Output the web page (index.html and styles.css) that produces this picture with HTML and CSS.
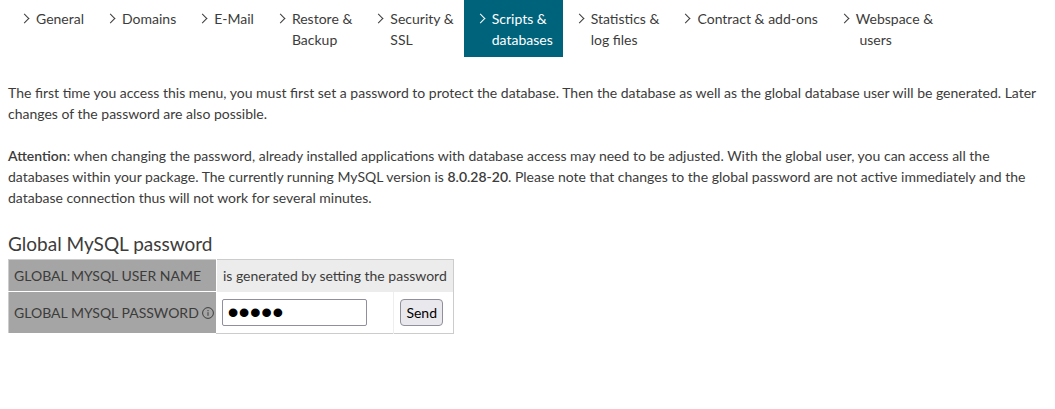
FILE: index.html
```html
<!DOCTYPE html>
<html lang="en">
<head>
    <meta charset="UTF-8">
    <meta name="viewport" content="width=device-width, initial-scale=1.0">
    <title>Scripts &amp; databases</title>

    <link rel="stylesheet" href="styles.css">
</head>
<body>
    <nav class="menu">
        <a href="#">General</a>
        <a href="#">Domains</a>
        <a href="#">E-Mail</a>
        <a href="#">Restore &amp;<br>Backup</a>
        <a href="#">Security &amp;<br>SSL</a>
        <a href="#" class="active">Scripts &amp;<br>databases</a>
        <a href="#">Statistics &amp;<br>log files</a>
        <a href="#">Contract &amp; add-ons</a>
        <a href="#">Webspace &amp;<br>&nbsp;users</a>
    </nav>

    <main>
        <p>The first time you access this menu, you must first set a password to protect the database. Then the database as well as the global database user will be generated. Later changes of the password are also possible.</p>
        <p><strong>Attention</strong>: when changing the password, already installed applications with database access may need to be adjusted. With the global user, you can access all the databases within your package. The currently running MySQL version is <strong>8.0.28-20</strong>. Please note that changes to the global password are not active immediately and the database connection thus will not work for several minutes.</p>

        <h2>Global MySQL password</h2>
        <form action="#">
            <table>
                <tr class="user-row">
                    <th scope="row">Global MySQL user name</th>
                    <td colspan="2">is generated by setting the password</td>
                </tr>
                <tr class="password-row">
                    <th scope="row">
                        <label for="password">Global MySQL password</label>
                        <svg class="info" viewBox="0 0 12 12" width="12" height="12" aria-hidden="true">
                            <circle cx="6" cy="6" r="5.4"/>
                            <path d="M6 5.2v3.6M6 3v1.2"/>
                        </svg>
                    </th>
                    <td class="field"><input type="password" id="password" value="mysql"></td>
                    <td class="action"><button type="submit">Send</button></td>
                </tr>
            </table>
        </form>
    </main>
</body>
</html>
```

FILE: styles.css
```css
body {
    margin: 0;
    background: #fff;
    color: #3c3c3b;
    font-family: Lato, "Liberation Sans", sans-serif;
    font-size: 14px;
    line-height: 21px;
}

/* menu */
.menu {
    display: flex;
    align-items: flex-start;
    padding-left: 8px;
}

.menu a {
    position: relative;
    padding: 8px 10px 7px 28px;
    color: inherit;
    text-decoration: none;
    white-space: nowrap;
}

.menu a::before {
    content: "";
    position: absolute;
    top: 15px;
    left: 13px;
    width: 6px;
    height: 6px;
    border: solid currentColor;
    border-width: 1px 1px 0 0;
    transform: rotate(45deg);
}

.menu .active {
    background: #00637c;
    color: #fff;
}

/* content */
main {
    padding: 25px 6px 0 8px;
}

p {
    margin: 0 0 21px;
}

strong {
    font-weight: 600;
}

h2 {
    margin: 0;
    font-size: 19px;
    font-weight: 400;
    line-height: 30px;
}

table {
    border-collapse: collapse;
    border: 1px solid #ccc;
}

th {
    padding: 5px 2px 5px 5px;
    background: #a5a5a5;
    border-bottom: 1px solid #fff;
    font-weight: 400;
    text-align: left;
    text-transform: uppercase;
    white-space: nowrap;
}

td {
    padding: 5px 5px 5px 6px;
    white-space: nowrap;
}

.user-row td {
    background: #ececec;
    border-left: 1px solid #fff;
}

.password-row {
    height: 42px;
}

.field {
    width: 166px;
    border-right: 1px solid #eee;
}

.action {
    width: 48px;
}

.info {
    vertical-align: -1px;
    fill: none;
    stroke: #3c3c3b;
}

input,
button {
    display: block;
    box-sizing: border-box;
    height: 27px;
    border: 1px solid #8f8f9d;
    color: #000;
    font: inherit;
}

input {
    width: 145px;
    padding: 1px 4px;
    border-radius: 2px;
    background: #fff;
    font-family: "Liberation Sans", sans-serif;
    font-size: 32px;
}

button {
    padding: 1px 5px;
    border-radius: 4px;
    background: #e9e9ed;
}
```
